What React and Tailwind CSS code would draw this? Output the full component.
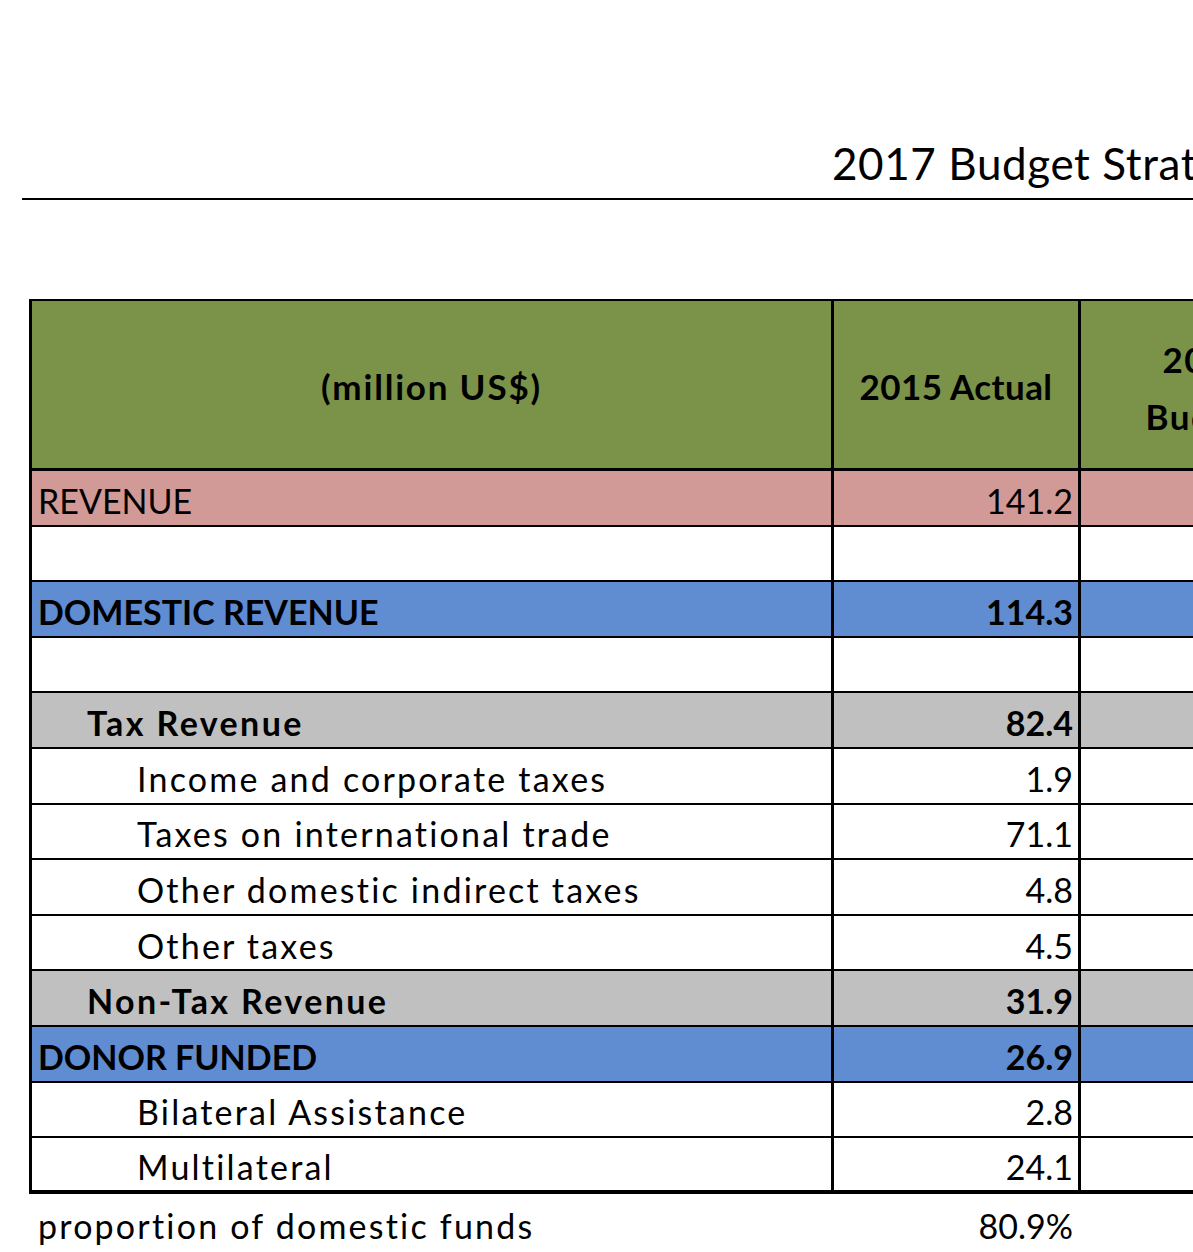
import React from "react";

const rows = [
  { label: "REVENUE", value: "141.2", bg: "bg-[#d19a96]", bold: false, indent: 0 },
  { label: "", value: "", bg: "bg-white" },
  { label: "DOMESTIC REVENUE", value: "114.3", bg: "bg-[#608cd2]", bold: true, indent: 0 },
  { label: "", value: "", bg: "bg-white" },
  { label: "Tax Revenue", value: "82.4", bg: "bg-[#c0c0c0]", bold: true, indent: 1 },
  { label: "Income and corporate taxes", value: "1.9", bg: "bg-white", indent: 2 },
  { label: "Taxes on international trade", value: "71.1", bg: "bg-white", indent: 2 },
  { label: "Other domestic indirect taxes", value: "4.8", bg: "bg-white", indent: 2 },
  { label: "Other taxes", value: "4.5", bg: "bg-white", indent: 2 },
  { label: "Non-Tax Revenue", value: "31.9", bg: "bg-[#c0c0c0]", bold: true, indent: 1 },
  { label: "DONOR FUNDED", value: "26.9", bg: "bg-[#608cd2]", bold: true, indent: 0 },
  { label: "Bilateral Assistance", value: "2.8", bg: "bg-white", indent: 2 },
  { label: "Multilateral", value: "24.1", bg: "bg-white", indent: 2 },
];

const indentClass = ["pl-[6px]", "pl-[55px]", "pl-[105px]"];

// caps-only labels keep normal spacing, mixed-case ones run wider in the source
function labelTracking(label, bold) {
  if (label === label.toUpperCase()) return "tracking-normal";
  return bold ? "tracking-[2.4px]" : "tracking-[2.2px]";
}

function Row({ row, last }) {
  const weight = row.bold ? "font-bold" : "font-normal";
  return (
    <div
      className={`grid grid-cols-[805px_247px_250px] h-[55.6px] ${row.bg} ${
        last ? "border-b-[4px]" : "border-b-[2px]"
      } border-black`}
    >
      <div
        className={`flex items-center border-l-[3px] border-r-[3px] border-black ${indentClass[row.indent || 0]} ${weight} ${labelTracking(row.label, row.bold)}`}
      >
        <span className="pt-[6px] whitespace-nowrap">{row.label}</span>
      </div>
      <div className={`flex items-center justify-end border-r-[3px] border-black pr-[5px] ${weight}`}>
        <span className="pt-[6px]">{row.value}</span>
      </div>
      <div />
    </div>
  );
}

export default function App() {
  return (
    <div
      className="w-[1193px] h-[1252px] overflow-hidden bg-white text-black"
      style={{ fontFamily: "Lato, 'Open Sans', sans-serif" }}
    >
      <div className="ml-[22px] h-[200px] flex items-end border-b-2 border-black">
        <div className="pl-[810px] pb-[13px] text-[44px] leading-none whitespace-nowrap tracking-[0.6px]">
          2017 Budget Strategy
        </div>
      </div>

      <div className="mt-[99px] ml-[29px] w-[1302px] text-[34px] leading-none">
        <div className="grid grid-cols-[805px_247px_250px] h-[172px] bg-[#7b9249] border-t-2 border-b-[3px] border-black font-bold text-[35px]">
          <div className="flex items-center justify-center border-l-[3px] border-r-[3px] border-black pt-[4px] tracking-[1.8px]">
            (million US$)
          </div>
          <div className="flex items-center justify-center border-r-[3px] border-black pt-[4px] tracking-[0.4px]">
            2015 Actual
          </div>
          <div className="flex flex-col items-center justify-center gap-[22px] pt-[6px] tracking-[1.5px]">
            <span>2016</span>
            <span>Budget</span>
          </div>
        </div>
        {rows.map((row, i) => (
          <Row key={i} row={row} last={i === rows.length - 1} />
        ))}
        <div className="grid grid-cols-[805px_247px_250px] h-[64px]">
          <div className="flex items-center pl-[9px] tracking-[2.2px] whitespace-nowrap">
            proportion of domestic funds
          </div>
          <div className="flex items-center justify-end pr-[8px]">80.9%</div>
          <div />
        </div>
      </div>
    </div>
  );
}
